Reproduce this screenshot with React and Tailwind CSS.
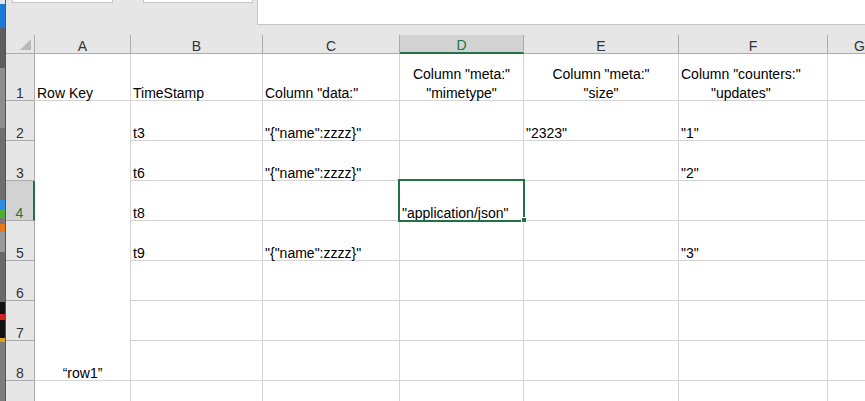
import React from 'react'

// Excel-like sheet: column widths include the 1px right gridline
const GRID = 'grid grid-cols-[29px_96px_132px_137px_124px_155px_149px_64px] grid-rows-[19px_47px_repeat(8,40px)]'

const hdr = 'bg-[#e6e6e6] border-r border-b border-[#ababab] flex items-end justify-center text-[#333] text-[14px] leading-[13px]'
const rowHdr = 'bg-[#e6e6e6] border-r border-b border-[#ababab] flex items-end justify-center text-[#333] text-[14px] leading-[13px]'
const cell = 'border-r border-b border-[#d4d4d4] flex items-end px-[2px] text-[14px] leading-[13px] text-black whitespace-nowrap'
const twoLine = 'border-r border-b border-[#d4d4d4] flex flex-col items-center justify-end gap-[6px] text-[14px] leading-[13px] text-black whitespace-nowrap'

const JSON_TXT = '"{"name":zzzz}"'

const rows = [
  { n: '2', b: 't3', c: JSON_TXT, d: '', e: '"2323"', f: '"1"' },
  { n: '3', b: 't6', c: JSON_TXT, d: '', e: '', f: '"2"' },
  { n: '4', b: 't8', c: '', d: '"application/json"', e: '', f: '', active: true },
  { n: '5', b: 't9', c: JSON_TXT, d: '', e: '', f: '"3"' },
  { n: '6', b: '', c: '', d: '', e: '', f: '' },
  { n: '7', b: '', c: '', d: '', e: '', f: '' },
  { n: '8', b: '', c: '', d: '', e: '', f: '' },
]

function Wallpaper() {
  return (
    <div className="w-[5px] h-full flex flex-col shrink-0 bg-[#7a7a7a]">
      <div className="h-[4px] bg-[#dfe6ee]" />
      <div className="h-[24px] bg-[#1a7ad6]" />
      <div className="h-[40px] bg-[#5e5e5e]" />
      <div className="h-[60px] bg-[#8d8d8d]" />
      <div className="h-[72px] bg-[#6f6f6f]" />
      <div className="h-[10px] bg-[#2f8ae0]" />
      <div className="h-[8px] bg-[#4caf38]" />
      <div className="h-[6px] bg-[#7a7a7a]" />
      <div className="h-[8px] bg-[#e87a1c]" />
      <div className="h-[20px] bg-[#9a9a9a]" />
      <div className="h-[50px] bg-[#6a6a6a]" />
      <div className="h-[12px] bg-[#111]" />
      <div className="h-[6px] bg-[#d32020]" />
      <div className="h-[18px] bg-[#111]" />
      <div className="h-[4px] bg-[#e0a020]" />
      <div className="flex-1 bg-[#7d7d7d]" />
    </div>
  )
}

export default function App() {
  return (
    <div className="w-[865px] h-[401px] overflow-hidden flex bg-white font-['Liberation_Sans',Arial,sans-serif]">
      <Wallpaper />
      <div className="w-px h-full bg-[#217346] shrink-0" />
      <div className="flex-1 flex flex-col min-w-0">
        {/* ribbon remnants */}
        <div className="h-[35px] bg-[#e6e6e6] flex items-start shrink-0">
          <div className="ml-[6px] w-[101px] h-[3px] bg-white border border-t-0 border-[#c6c6c6]" />
          <div className="ml-[30px] w-[110px] h-[3px] bg-white border border-t-0 border-[#c6c6c6]" />
          <div className="ml-[4px] flex-1 h-[25px] bg-white border-l border-b border-[#c6c6c6]" />
        </div>

        <div className="relative">
          <div className={GRID}>
            {/* column headers */}
            <div className="bg-[#e6e6e6] border-r border-b border-[#ababab] relative">
              <svg width="12" height="12" viewBox="0 0 12 12" className="absolute right-[2px] bottom-[2px]">
                <polygon points="11,0 11,11 0,11" fill="#b9b9b9" />
              </svg>
            </div>
            <div className={hdr}>A</div>
            <div className={hdr}>B</div>
            <div className={hdr}>C</div>
            <div className="bg-[#d2d2d2] border-r border-r-[#ababab] border-b-2 border-b-[#217346] flex items-end justify-center text-[#217346] text-[14px] leading-[13px]">D</div>
            <div className={hdr}>E</div>
            <div className={hdr}>F</div>
            <div className={hdr}>G</div>

            {/* row 1 */}
            <div className={rowHdr}>1</div>
            <div className={cell}>Row Key</div>
            <div className={cell}>TimeStamp</div>
            <div className={cell}>Column "data:"</div>
            <div className={twoLine}>
              <span>Column "meta:"</span>
              <span>"mimetype"</span>
            </div>
            <div className={twoLine}>
              <span>Column "meta:"</span>
              <span>"size"</span>
            </div>
            <div className={cell}>
              <div className="flex flex-col items-center gap-[6px]">
                <span>Column "counters:"</span>
                <span>"updates"</span>
              </div>
            </div>
            <div className={cell} />

            {/* rows 2-8, column A merged */}
            {rows.map((r, i) => (
              <React.Fragment key={r.n}>
                {r.active ? (
                  <div className="bg-[#d2d2d2] border-b border-b-[#ababab] border-r-2 border-r-[#217346] flex items-end justify-center text-[#217346] text-[14px] leading-[13px]">{r.n}</div>
                ) : (
                  <div className={rowHdr}>{r.n}</div>
                )}
                {i === 0 && (
                  <div className="row-span-7 border-r border-b border-[#d4d4d4] flex items-end justify-center text-[14px] leading-[13px] text-black">“row1”</div>
                )}
                <div className={cell}>{r.b}</div>
                <div className={cell}>{r.c}</div>
                <div className={cell}>{r.d}</div>
                <div className={cell}>{r.e}</div>
                <div className={cell}>{r.f}</div>
                <div className={cell} />
              </React.Fragment>
            ))}

            {/* row 9 (cut off by the window) */}
            <div className={rowHdr} />
            <div className={cell} />
            <div className={cell} />
            <div className={cell} />
            <div className={cell} />
            <div className={cell} />
            <div className={cell} />
            <div className={cell} />
          </div>

          {/* active cell D4 */}
          <div className="absolute left-[392px] top-[144px] w-[127px] h-[43px] border-2 border-[#217346] pointer-events-none" />
          <div className="absolute left-[515px] top-[182px] w-[6px] h-[6px] bg-[#217346] border border-white pointer-events-none" />
        </div>
      </div>
    </div>
  )
}
